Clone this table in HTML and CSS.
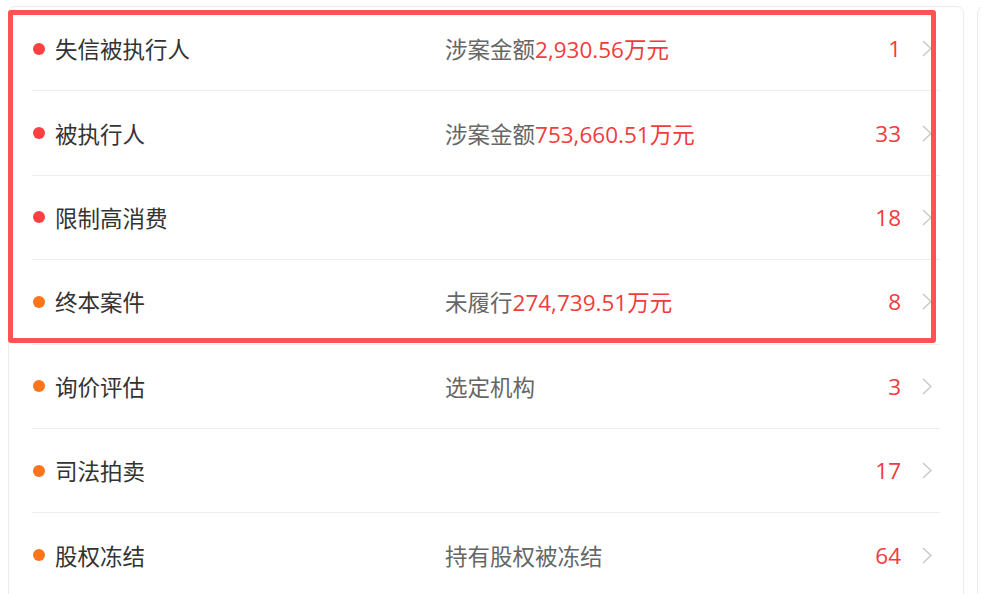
FILE: index.html
```html
<!DOCTYPE html>
<html lang="zh-CN">
<head>
<meta charset="utf-8">
<link rel="stylesheet" href="styles.css">
</head>
<body>
<div class="page">
  <div class="card">
    <div class="row">
      <div class="title"><span class="dot red"></span>失信被执行人</div>
      <div class="mid">涉案金额<span class="hl">2,930.56万元</span></div>
      <div class="num">1</div>
      <svg class="chev" viewBox="0 0 10 17"><polyline points="1,1 9,8.5 1,16"/></svg>
    </div>
    <div class="row">
      <div class="title"><span class="dot red"></span>被执行人</div>
      <div class="mid">涉案金额<span class="hl">753,660.51万元</span></div>
      <div class="num">33</div>
      <svg class="chev" viewBox="0 0 10 17"><polyline points="1,1 9,8.5 1,16"/></svg>
    </div>
    <div class="row">
      <div class="title"><span class="dot red"></span>限制高消费</div>
      <div class="mid"></div>
      <div class="num">18</div>
      <svg class="chev" viewBox="0 0 10 17"><polyline points="1,1 9,8.5 1,16"/></svg>
    </div>
    <div class="row">
      <div class="title"><span class="dot orange"></span>终本案件</div>
      <div class="mid">未履行<span class="hl">274,739.51万元</span></div>
      <div class="num">8</div>
      <svg class="chev" viewBox="0 0 10 17"><polyline points="1,1 9,8.5 1,16"/></svg>
    </div>
    <div class="row">
      <div class="title"><span class="dot orange"></span>询价评估</div>
      <div class="mid">选定机构</div>
      <div class="num">3</div>
      <svg class="chev" viewBox="0 0 10 17"><polyline points="1,1 9,8.5 1,16"/></svg>
    </div>
    <div class="row">
      <div class="title"><span class="dot orange"></span>司法拍卖</div>
      <div class="mid"></div>
      <div class="num">17</div>
      <svg class="chev" viewBox="0 0 10 17"><polyline points="1,1 9,8.5 1,16"/></svg>
    </div>
    <div class="row">
      <div class="title"><span class="dot orange"></span>股权冻结</div>
      <div class="mid">持有股权被冻结</div>
      <div class="num">64</div>
      <svg class="chev" viewBox="0 0 10 17"><polyline points="1,1 9,8.5 1,16"/></svg>
    </div>
    <div class="highlight"></div>
  </div>
  <div class="card side"></div>
</div>
</body>
</html>
```

FILE: styles.css
```css
html, body {
  margin: 0;
  padding: 0;
  background: #ffffff;
  overflow: hidden;
}
body {
  width: 981px;
  height: 594px;
  font-family: "Open Sans", "Noto Sans CJK SC", sans-serif;
}
.page {
  display: flex;
  gap: 13px;
  padding: 6px 0 0 8px;
}
.card {
  position: relative;
  flex: 0 0 auto;
  width: 956px;
  box-sizing: border-box;
  height: 640px;
  border: 1px solid #ececec;
  border-radius: 7px;
  padding: 0 23px 0 23px;
  background: #fff;
}
.card.side {
  width: 200px;
}
.row {
  display: flex;
  align-items: center;
  height: 84.4px;
  box-sizing: border-box;
  border-bottom: 1px solid #eeeeee;
  padding-left: 1px;
  font-size: 22.5px;
  font-weight: 400;
}
.title {
  display: flex;
  align-items: center;
  width: 412px;
  flex: 0 0 auto;
  color: #333333;
}
.dot {
  width: 12px;
  height: 12px;
  border-radius: 50%;
  margin-right: 10px;
  flex: 0 0 auto;
}
.dot.red { background: #fd4040; }
.dot.orange { background: #fd741a; }
.mid {
  flex: 1 1 auto;
  color: #666666;
}
.hl { color: #f03c3c; }
.num {
  color: #f03c3c;
  text-align: right;
}
.chev {
  width: 10px;
  height: 17px;
  margin-left: 21px;
  margin-right: 8px;
  flex: 0 0 auto;
}
.chev polyline {
  fill: none;
  stroke: #c9c9c9;
  stroke-width: 1.5;
}
.highlight {
  position: absolute;
  left: -1px;
  top: 3px;
  width: 928px;
  height: 333px;
  box-sizing: border-box;
  border: 5px solid #ff5252;
  border-radius: 3px;
  pointer-events: none;
}
```
